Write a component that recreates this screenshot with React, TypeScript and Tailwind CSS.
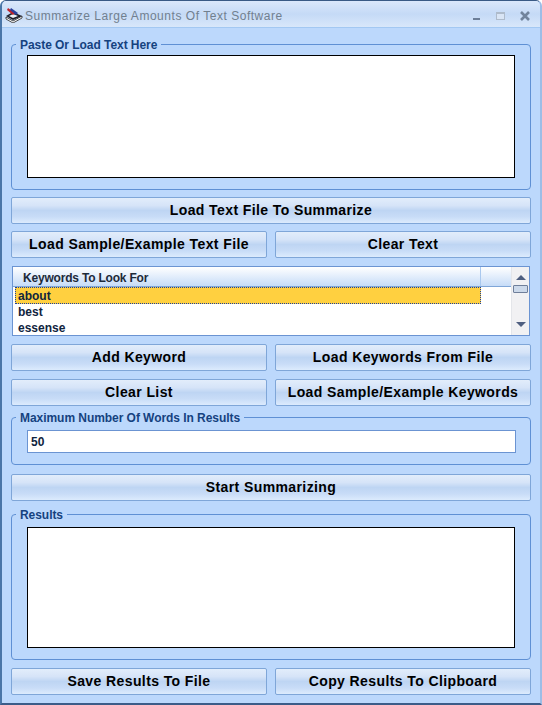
const font = "font-['Liberation_Sans',Arial,sans-serif]";

function Btn({ children, className = "" }: { children: React.ReactNode; className?: string }) {
  return (
    <button className={`h-[27px] rounded-[2px] border border-[#7fa6d8] bg-[linear-gradient(#e2edfb_0%,#d6e4f8_30%,#bed5f3_50%,#c8dcf7_75%,#dcebfd_100%)] text-[14px] font-bold tracking-[0.4px] text-black ${className}`}>
      {children}
    </button>
  );
}

function Group({ title, className = "", children }: { title: string; className?: string; children: React.ReactNode }) {
  return (
    <div className={`relative rounded-[4px] border border-[#5f90d4] ${className}`}>
      <span className="absolute left-[4px] top-[-7px] bg-[#bcd8fc] px-[4px] text-[12px] leading-[14px] font-bold tracking-[-0.05px] text-[#15427f]">{title}</span>
      {children}
    </div>
  );
}

function TitleIcon() {
  return (
    <svg width="18" height="16" viewBox="0 0 18 16" className="mt-[2px] shrink-0">
      <path d="M1 10 L8 14 L17 9 L17 11 L8 16 L1 12 Z" fill="#fff" stroke="#222" strokeWidth="0.8" />
      <path d="M1 9 L8 5 L17 9 L8 13 Z" fill="#1f1f2a" />
      <path d="M4 9 L8 7 L13 9 L8 11 Z" fill="#eef2f8" />
      <path d="M3 1 L10 6 L8 8 L2 3 Z" fill="#c0202a" />
      <path d="M6 1 L13 6 L11 8 L5 3 Z" fill="#2a3f9a" />
    </svg>
  );
}

export default function App() {
  return (
    <div className={`${font} flex h-[705px] w-[542px] flex-col overflow-hidden rounded-t-[6px] border-x-[2px] border-b-[2px] border-t border-l-[#4a76a8] border-r-[#9dbde6] border-b-[#3c5c88] border-t-[#3a5a85] bg-[#bcd8fc]`}>
      <div className="flex h-[27px] shrink-0 items-center border-b border-[#a3c8f2] bg-[linear-gradient(#dbe8fb,#c5daf6_50%,#d8e7fa)] pl-[3px]">
        <TitleIcon />
        <span className="ml-[2px] mt-[3px] text-[12px] tracking-[0.53px] text-[#71808f]">Summarize Large Amounts Of Text Software</span>
        <div className="ml-auto flex items-center">
          <div className="mr-[16px] mt-[9px] h-[2px] w-[7px] bg-[#6d7f98]" />
          <div className="mr-[15px] mt-[4px] h-[8px] w-[9px] border border-t-[2px] border-[#aebbcb] bg-[#d9e5f5]" />
          <svg width="10" height="10" viewBox="0 0 10 10" className="mr-[10px] mt-[3px]">
            <path d="M1 1 L9 9 M9 1 L1 9" stroke="#72849c" strokeWidth="2.6" />
          </svg>
        </div>
      </div>

      <div className="flex flex-1 flex-col px-[9px] pt-[16px]">
        <Group title="Paste Or Load Text Here" className="h-[146px] px-[15px] pt-[10px]">
          <div className="h-[123px] border border-black bg-white" />
        </Group>

        <Btn className="mt-[7px] w-full">Load Text File To Summarize</Btn>
        <div className="mt-[7px] flex gap-[8px]">
          <Btn className="w-[256px]">Load Sample/Example Text File</Btn>
          <Btn className="w-[256px]">Clear Text</Btn>
        </div>

        <div className="mx-[1px] mt-[8px] flex h-[70px] border border-[#6b94d2] bg-white">
          <div className="flex min-w-0 flex-1 flex-col">
            <div className="flex h-[20px] shrink-0 border-b border-[#7fa6d8] bg-[linear-gradient(#ffffff,#c6dcf8)]">
              <div className="w-[468px] border-r border-[#a9c8ee] pl-[10px] text-[12px] leading-[22px] font-bold tracking-[-0.2px] text-[#1d2a3a]">Keywords To Look For</div>
            </div>
            <div className="ml-[2px] h-[17px] w-[466px] border border-dotted border-[#1b3fa0] bg-[#ffd040] pl-[2px] text-[12px] leading-[16px] font-bold text-[#10243e]">about</div>
            <div className="pl-[5px] text-[12px] leading-[16px] font-bold text-[#10243e]">best</div>
            <div className="pl-[5px] text-[12px] leading-[16px] font-bold text-[#10243e]">essense</div>
          </div>
          <div className="relative flex w-[18px] shrink-0 flex-col items-center border-l border-[#e4e6ea] bg-[#f1f1f3]">
            <div className="mt-[8px] h-0 w-0 border-x-[5px] border-b-[5px] border-x-transparent border-b-[#4f5f80]" />
            <div className="mt-[5px] h-[8px] w-[15px] rounded-[1px] border border-[#6f7f9a] bg-[#ccd9ea]" />
            <div className="mt-auto mb-[8px] h-0 w-0 border-x-[5px] border-t-[5px] border-x-transparent border-t-[#4f5f80]" />
          </div>
        </div>

        <div className="mt-[8px] flex gap-[8px]">
          <Btn className="w-[256px]">Add Keyword</Btn>
          <Btn className="w-[256px]">Load Keywords From File</Btn>
        </div>
        <div className="mt-[8px] flex gap-[8px]">
          <Btn className="w-[256px]">Clear List</Btn>
          <Btn className="w-[256px]">Load Sample/Example Keywords</Btn>
        </div>

        <Group title="Maximum Number Of Words In Results" className="mt-[11px] h-[48px] px-[15px] pt-[12px]">
          <div className="h-[23px] w-[489px] border border-[#6b94d2] bg-white pl-[3px] text-[12px] leading-[22px] font-bold text-[#10243e]">50</div>
        </Group>

        <Btn className="mt-[9px] w-full">Start Summarizing</Btn>

        <Group title="Results" className="mt-[13px] h-[146px] px-[15px] pt-[12px]">
          <div className="h-[121px] border border-black bg-white" />
        </Group>

        <div className="mt-[8px] flex gap-[8px]">
          <Btn className="w-[256px]">Save Results To File</Btn>
          <Btn className="w-[256px]">Copy Results To Clipboard</Btn>
        </div>
      </div>
    </div>
  );
}
